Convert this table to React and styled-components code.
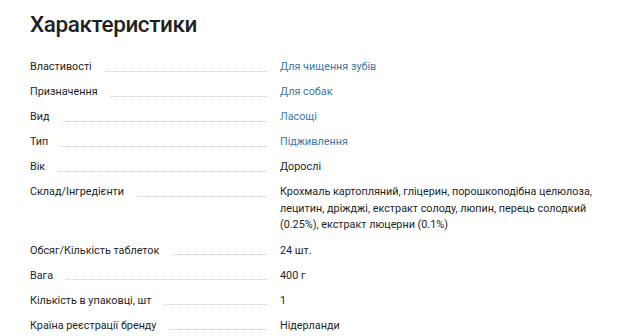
import React from "react";
import styled, { createGlobalStyle } from "styled-components";

const Global = createGlobalStyle`
  html, body { margin: 0; padding: 0; background: #fff; }
  body { font-family: Roboto, "Noto Sans", Arial, sans-serif; color: #221f1f; }
`;

const Section = styled.section`
  padding: 9px 0 0 30px;
  width: 600px;
  box-sizing: border-box;
`;

const Title = styled.h2`
  margin: 0 0 20px;
  font-size: 22.5px;
  line-height: 30px;
  font-weight: 500;
  letter-spacing: -0.4px;
  color: #221f1f;
`;

const List = styled.dl`
  margin: 0;
  display: flex;
  flex-direction: column;
  gap: 8.6px;
`;

const Row = styled.div`
  display: grid;
  grid-template-columns: 237px 330px;
  column-gap: 13px;
  align-items: start;
`;

const Label = styled.dt`
  display: flex;
  align-items: flex-end;
  font-size: 10.8px;
  line-height: 16.5px;
  margin: 0;
  color: #221f1f;
  white-space: nowrap;
`;

const Dots = styled.span`
  flex: 1;
  margin-left: 13px;
  margin-bottom: 4px;
  border-bottom: 1px dotted #c9c9c9;
`;

const Value = styled.dd`
  margin: 0;
  font-size: 10.8px;
  line-height: 16.5px;
  color: ${(p) => (p.$link ? "#3e77aa" : "#221f1f")};
`;

const rows = [
  ["Властивості", "Для чищення зубів", true],
  ["Призначення", "Для собак", true],
  ["Вид", "Ласощі", true],
  ["Тип", "Підживлення", true],
  ["Вік", "Дорослі", false],
  [
    "Склад/Інгредієнти",
    "Крохмаль картопляний, гліцерин, порошкоподібна целюлоза, лецитин, дріжджі, екстракт солоду, люпин, перець солодкий (0.25%), екстракт люцерни (0.1%)",
    false,
  ],
  ["Обсяг/Кількість таблеток", "24 шт.", false],
  ["Вага", "400 г", false],
  ["Кількість в упаковці, шт", "1", false],
  ["Країна реєстрації бренду", "Нідерланди", false],
];

export default function App() {
  return (
    <>
      <Global />
      <Section>
        <Title>Характеристики</Title>
        <List>
          {rows.map(([l, v, link]) => (
            <Row key={l}>
              <Label>
                {l}
                <Dots />
              </Label>
              <Value $link={link}>{v}</Value>
            </Row>
          ))}
        </List>
      </Section>
    </>
  );
}
